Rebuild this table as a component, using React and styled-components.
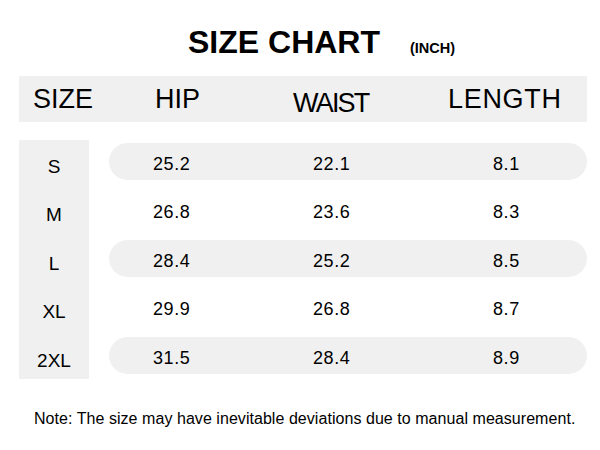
import React from "react";
import styled, { createGlobalStyle } from "styled-components";

const Global = createGlobalStyle`
  html, body { margin: 0; padding: 0; background: #fff; }
  body { font-family: "Liberation Sans", Arial, Helvetica, sans-serif; color: #111; }
`;

const Page = styled.div`
  width: 600px;
  height: 450px;
  background: #fff;
  box-sizing: border-box;
  padding: 26px 13px 0 19px;
  display: flex;
  flex-direction: column;
`;

const TitleRow = styled.div`
  display: flex;
  align-items: baseline;
  padding-left: 169px;
  height: 32px;
`;

const Title = styled.h1`
  margin: 0;
  font-size: 32px;
  line-height: 32px;
  font-weight: 700;
  color: #000;
`;

const Unit = styled.span`
  margin-left: 30px;
  font-size: 14.5px;
  font-weight: 700;
  color: #000;
`;

const HeaderBand = styled.div`
  margin-top: 18px;
  height: 46px;
  background: #f0f0f0;
  display: grid;
  grid-template-columns: 122px 138px 155px 1fr;
  align-items: center;
  padding-left: 14px;
`;

const HeaderCell = styled.div`
  font-size: 27px;
  color: #000;
  padding-top: ${(p) => (p.$drop ? 8 : 0)}px;
  letter-spacing: ${(p) => p.$spacing || 0}px;
`;

const Body = styled.div`
  margin-top: 18px;
  display: flex;
  gap: 20px;
`;

const SizeColumn = styled.div`
  width: 70px;
  background: #f0f0f0;
  padding: 3px 0 5px;
  display: flex;
  flex-direction: column;
  gap: 11.5px;
`;

const SizeCell = styled.div`
  height: 37px;
  box-sizing: border-box;
  padding-top: 10px;
  display: flex;
  align-items: center;
  justify-content: center;
  font-size: 19px;
  color: #000;
`;

const Rows = styled.div`
  flex: 1;
  padding-top: 3px;
  display: flex;
  flex-direction: column;
  gap: 11.5px;
`;

const Row = styled.div`
  height: 37px;
  box-sizing: border-box;
  padding: 5px 0 0 44px;
  border-radius: 19px;
  background: ${(p) => (p.$striped ? "#f0f0f0" : "transparent")};
  display: grid;
  grid-template-columns: 160px 180px 1fr;
  align-items: center;
`;

const Value = styled.div`
  font-size: 18px;
  letter-spacing: 0.6px;
  color: #000;
`;

const Note = styled.p`
  margin: 31px 0 0 15px;
  font-size: 16px;
  line-height: 18px;
  letter-spacing: 0.05px;
  color: #000;
`;

const data = [
  { size: "S", hip: "25.2", waist: "22.1", length: "8.1" },
  { size: "M", hip: "26.8", waist: "23.6", length: "8.3" },
  { size: "L", hip: "28.4", waist: "25.2", length: "8.5" },
  { size: "XL", hip: "29.9", waist: "26.8", length: "8.7" },
  { size: "2XL", hip: "31.5", waist: "28.4", length: "8.9" },
];

export default function App() {
  return (
    <>
      <Global />
      <Page>
        <TitleRow>
          <Title>SIZE CHART</Title>
          <Unit>(INCH)</Unit>
        </TitleRow>
        <HeaderBand>
          <HeaderCell>SIZE</HeaderCell>
          <HeaderCell>HIP</HeaderCell>
          <HeaderCell $drop $spacing={-1.8}>WAIST</HeaderCell>
          <HeaderCell $spacing={0.7}>LENGTH</HeaderCell>
        </HeaderBand>
        <Body>
          <SizeColumn>
            {data.map((d) => (
              <SizeCell key={d.size}>{d.size}</SizeCell>
            ))}
          </SizeColumn>
          <Rows>
            {data.map((d, i) => (
              <Row key={d.size} $striped={i % 2 === 0}>
                <Value>{d.hip}</Value>
                <Value>{d.waist}</Value>
                <Value>{d.length}</Value>
              </Row>
            ))}
          </Rows>
        </Body>
        <Note>Note: The size may have inevitable deviations due to manual measurement.</Note>
      </Page>
    </>
  );
}
